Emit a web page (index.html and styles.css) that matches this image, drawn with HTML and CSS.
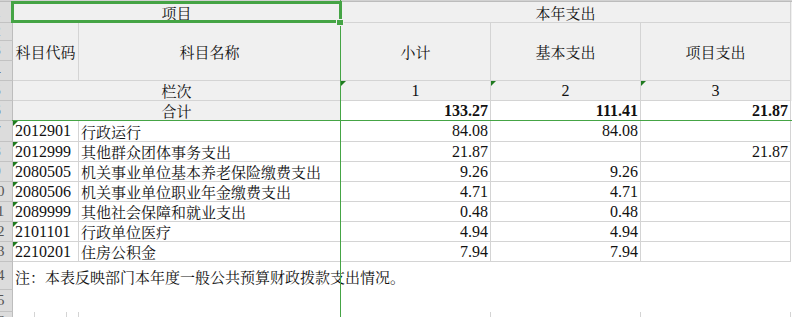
FILE: index.html
```html
<!DOCTYPE html>
<html lang="zh-CN">
<head>
<meta charset="utf-8">
<title>本年支出</title>
<link rel="stylesheet" href="styles.css">
</head>
<body>
<div class="sheet">
  <div class="grid">
    <div class="strip"></div>

    <div class="rh"><span>1</span></div>
    <div class="c hd cn span2">项目</div>
    <div class="c hd cn span3">本年支出</div>
    <div class="f hdf"></div>

    <div class="rh"><span>2</span></div>
    <div class="c hd cn rows3">科目代码</div>
    <div class="c hd cn rows3">科目名称</div>
    <div class="c hd cn rows3">小计</div>
    <div class="c hd cn rows3">基本支出</div>
    <div class="c hd cn rows3">项目支出</div>
    <div class="f hdf rows3"></div>
    <div class="rh"><span>3</span></div>
    <div class="rh"><span>4</span></div>

    <div class="rh"><span>5</span></div>
    <div class="c hd cn span2">栏次</div>
    <div class="c hd num ctr tri">1</div>
    <div class="c hd num ctr tri">2</div>
    <div class="c hd num ctr tri">3</div>
    <div class="f hdf"></div>

    <div class="rh"><span>6</span></div>
    <div class="c hd cn span2">合计</div>
    <div class="c num right bold">133.27</div>
    <div class="c num right bold">111.41</div>
    <div class="c num right bold">21.87</div>
    <div class="f"></div>

    <div class="rh"><span>7</span></div>
    <div class="c num left tri">2012901</div>
    <div class="c cjk left">行政运行</div>
    <div class="c num right">84.08</div>
    <div class="c num right">84.08</div>
    <div class="c num right"></div>
    <div class="f"></div>

    <div class="rh"><span>8</span></div>
    <div class="c num left tri">2012999</div>
    <div class="c cjk left">其他群众团体事务支出</div>
    <div class="c num right">21.87</div>
    <div class="c num right"></div>
    <div class="c num right">21.87</div>
    <div class="f"></div>

    <div class="rh"><span>9</span></div>
    <div class="c num left tri">2080505</div>
    <div class="c cjk left">机关事业单位基本养老保险缴费支出</div>
    <div class="c num right">9.26</div>
    <div class="c num right">9.26</div>
    <div class="c num right"></div>
    <div class="f"></div>

    <div class="rh"><span>10</span></div>
    <div class="c num left tri">2080506</div>
    <div class="c cjk left">机关事业单位职业年金缴费支出</div>
    <div class="c num right">4.71</div>
    <div class="c num right">4.71</div>
    <div class="c num right"></div>
    <div class="f"></div>

    <div class="rh"><span>11</span></div>
    <div class="c num left tri">2089999</div>
    <div class="c cjk left">其他社会保障和就业支出</div>
    <div class="c num right">0.48</div>
    <div class="c num right">0.48</div>
    <div class="c num right"></div>
    <div class="f"></div>

    <div class="rh"><span>12</span></div>
    <div class="c num left tri">2101101</div>
    <div class="c cjk left">行政单位医疗</div>
    <div class="c num right">4.94</div>
    <div class="c num right">4.94</div>
    <div class="c num right"></div>
    <div class="f"></div>

    <div class="rh"><span>13</span></div>
    <div class="c num left tri">2210201</div>
    <div class="c cjk left">住房公积金</div>
    <div class="c num right">7.94</div>
    <div class="c num right">7.94</div>
    <div class="c num right"></div>
    <div class="f"></div>

    <div class="rh"><span>14</span></div>
    <div class="note cjk">注：本表反映部门本年度一般公共预算财政拨款支出情况。</div>
    <div class="rh"><span>15</span></div>

    <div class="rh"><span>16</span></div>
    <div class="sub">
      <div class="s1"></div>
      <div class="s2"></div>
      <div class="s3"></div>
    </div>
    <div class="blank"></div>
    <div class="blank br"></div>
    <div class="blank br"></div>
    <div class="blank br"></div>
    <div class="f"></div>
  </div>

  <div class="vline"></div>
  <div class="hline"></div>
  <div class="sel"></div>
  <div class="handle"></div>
</div>
</body>
</html>
```

FILE: styles.css
```css
html, body {
  margin: 0;
  padding: 0;
  background: #ffffff;
  overflow: hidden;
}

body {
  font-family: "Liberation Serif", "Noto Serif CJK SC", "Noto Sans CJK SC", serif;
  color: #111;
}

.sheet {
  position: relative;
  width: 792px;
  height: 317px;
  overflow: hidden;
}

.grid {
  display: grid;
  grid-template-columns: 13px 66px 262px 150px 150px 150px 1px;
  grid-template-rows: 2px 21px 18px 20px 20px 20px 20px 21px repeat(6, 20px) 28px 22px 20px;
}

.strip {
  grid-column: 1 / -1;
  background: #d2d2d2;
  border-bottom: 1px solid #bcbcbc;
}

.rh {
  background: #dcdcdc;
  border-right: 1px solid #bdbdbd;
  border-bottom: 1px solid #c2c2c2;
  overflow: hidden;
  display: flex;
  align-items: center;
  font-family: "Liberation Serif", serif;
  font-size: 15px;
  color: #555;
}

.rh span {
  display: block;
  flex: none;
  width: 30px;
  margin-left: -18px;
  text-align: center;
}

.c {
  border-right: 1px solid #d4d4d4;
  border-bottom: 1px solid #d4d4d4;
  display: flex;
  align-items: center;
  padding: 0 2px;
  white-space: nowrap;
  overflow: hidden;
  position: relative;
}

.hd {
  background: #f0f0f0;
}

.f {
  background: #ffffff;
}

.hdf {
  background: #f0f0f0;
}

.span2 {
  grid-column: span 2;
}

.span3 {
  grid-column: span 3;
}

.rows3 {
  grid-row: span 3;
}

.cn {
  justify-content: center;
  font-family: "Noto Serif CJK SC", "Noto Sans CJK SC", serif;
  font-size: 15px;
}

.cjk {
  font-family: "Noto Serif CJK SC", "Noto Sans CJK SC", serif;
  font-size: 15px;
}

.num {
  font-family: "Liberation Serif", serif;
  font-size: 16px;
}

.ctr {
  justify-content: center;
}

.left {
  justify-content: flex-start;
}

.right {
  justify-content: flex-end;
}

.bold {
  font-weight: bold;
}

.tri::before {
  content: "";
  position: absolute;
  top: 0;
  left: 0;
  border-top: 5px solid #1f7a1f;
  border-right: 5px solid transparent;
}

.note {
  grid-column: span 6;
  grid-row: span 2;
  align-self: start;
  height: 28px;
  display: flex;
  align-items: center;
  padding-left: 2px;
  white-space: nowrap;
}

.sub {
  display: grid;
  grid-template-columns: 22px 32px 12px;
}

.sub div {
  border-right: 1px solid #d4d4d4;
}

.blank {
  background: #fff;
}

.br {
  border-right: 1px solid #d4d4d4;
}

.vline {
  position: absolute;
  left: 340px;
  top: 0;
  width: 1px;
  height: 317px;
  background: #45a445;
}

.hline {
  position: absolute;
  left: 12px;
  top: 120px;
  width: 780px;
  height: 1px;
  background: #45a445;
}

.sel {
  position: absolute;
  left: 11px;
  top: 1px;
  width: 331px;
  height: 22px;
  border: 3px solid #45a445;
  box-sizing: border-box;
}

.handle {
  position: absolute;
  left: 336px;
  top: 19px;
  width: 8px;
  height: 7px;
  box-sizing: border-box;
  border: 1px solid #f0f0f0;
  background: #45a445;
}
```
